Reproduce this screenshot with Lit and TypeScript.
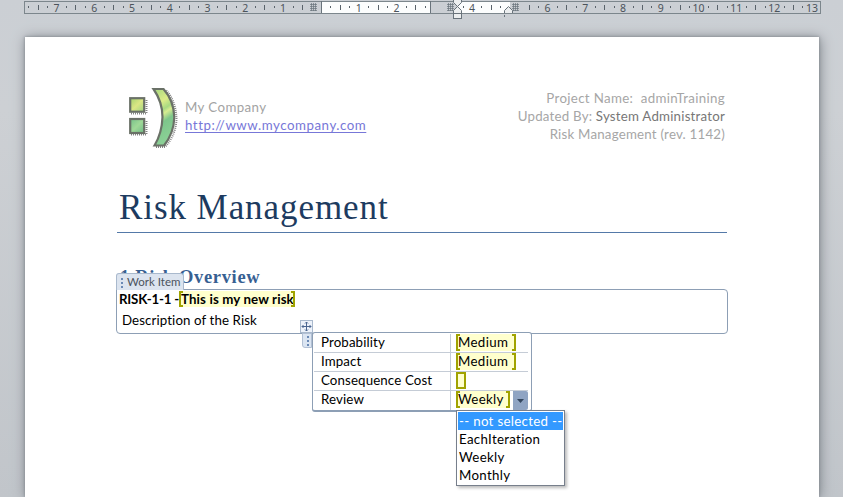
import { LitElement, html, css, svg } from "lit";
import { customElement, state } from "lit/decorators.js";

const ORIGIN = 320.9;
const UNIT = 37.77;

@customElement("page-ruler")
class PageRuler extends LitElement {
  static styles = css`
    :host { display: block; height: 37px; }
    svg { display: block; }
    text { font: 10.5px "Noto Sans", sans-serif; fill: #4b535b; text-anchor: middle; }
    .frame { fill: none; stroke: #7c868c; }
    .lit { fill: #fcfdfd; }
    .edge, .hatch { stroke: #69737b; fill: none; }
    .tick { fill: #59626a; }
    .marker { fill: #eceeef; stroke: #69737b; }
  `;

  private hatch(x: number) {
    return svg`<path class="hatch" d="M${x} 4.5h7M${x} 6.5h7M${x} 8.5h7M${x} 10.5h7M${x + 1.5} 3v8M${x + 3.5} 3v8M${x + 5.5} 3v8" stroke-width=".7"/>`;
  }

  render() {
    const marks = [];
    for (let q = -31; q <= 52; q++) {
      const x = ORIGIN + (q * UNIT) / 4;
      const n = q / 4;
      if ((x > 308 && x < 325) || (x > 426 && x < 459) || (x > 503 && x < 520)) continue;
      if (q % 4 === 0) marks.push(svg`<text x=${x} y="11.5">${Math.abs(n)}</text>`);
      else if (q % 2 === 0) marks.push(svg`<rect class="tick" x=${Math.round(x)} y="5" width="1" height="5"/>`);
      else marks.push(svg`<rect class="tick" x=${Math.round(x)} y="6" width="1" height="2"/>`);
    }
    return html`<svg width="843" height="24" viewBox="0 0 843 24">
      <rect class="lit" x="321" y="1" width="110" height="12" />
      <rect class="lit" x="457" y="1" width="53" height="12" />
      <rect class="frame" x="24.5" y="1.5" width="796" height="12" />
      <path class="edge" d="M321.5 1v12M430.5 1v12" />
      ${marks}${this.hatch(310)}${this.hatch(447)}${this.hatch(512)}
      <path class="marker" d="M453.500 0V2.500L457.500 6.500L461.500 2.500V0M453.500 13.500V10.500L457.500 6.500L461.500 10.500V13.500z" />
      <rect class="marker" x="453.500" y="13.500" width="8" height="5" />
      <path class="marker" d="M504.500 13V10.500L508.500 6.500L512.500 10.500V13" />
      <path class="edge" d="M504.500 15v2" />
    </svg>`;
  }
}

@customElement("company-logo")
class CompanyLogo extends LitElement {
  static styles = css`
    :host { display: block; width: 50px; height: 62px; }
    svg { display: block; }
    .shade { fill: none; stroke: #858585; stroke-width: 2; stroke-dasharray: 1 1; }
    .outline { stroke: #6a7167; stroke-width: 2.2; }
  `;
  render() {
    return html`<svg width="50" height="62" viewBox="0 0 50 62">
      <defs>
        <linearGradient id="arc" x1="0" y1="0" x2=".25" y2="1">
          <stop offset="0" stop-color="#a5d77f" /><stop offset=".3" stop-color="#dcec88" />
          <stop offset=".45" stop-color="#a8d982" /><stop offset=".52" stop-color="#d8ed91" />
          <stop offset=".66" stop-color="#7dc68b" /><stop offset="1" stop-color="#8bd096" />
        </linearGradient>
        <linearGradient id="eye" x1="0" y1="0" x2="1" y2="1">
          <stop offset="0" stop-color="#a4d36f" /><stop offset=".5" stop-color="#dbe784" /><stop offset="1" stop-color="#9ed580" />
        </linearGradient>
        <linearGradient id="eye2" x1="0" y1="0" x2="1" y2="1">
          <stop offset="0" stop-color="#76c18a" /><stop offset=".5" stop-color="#a0d998" /><stop offset="1" stop-color="#6fbb87" />
        </linearGradient>
      </defs>
      <path class="shade" d="M3 26.500H18.500V12M3 47.500H18.500V33M28 60H37Q48 48 48.500 32Q48 14 38 3" />
      <rect class="outline" fill="url(#eye)" x="2.200" y="11.200" width="14" height="13.500" />
      <rect class="outline" fill="url(#eye2)" x="2.200" y="32" width="14" height="14" />
      <path class="outline" fill="url(#arc)" d="M25.500 2H35.500Q46 14 46.300 30Q46 46 36 58.500H26.500Q34 46 34.500 30Q34.500 15 25.500 2Z" />
    </svg>`;
  }
}

@customElement("app-root")
class AppRoot extends LitElement {
  @state() private selected = 0;
  private options = ["-- not selected --", "EachIteration", "Weekly", "Monthly"];

  static styles = css`
    :host {
      display: block; width: 843px; height: 497px; overflow: hidden; box-sizing: border-box;
      font: 13.3px/18px Lato, "Liberation Sans", sans-serif; color: #000;
      font-variant-ligatures: none;
      background: linear-gradient(#cbcfd4 0, #cdd0d4 110px, #c1c5ca 497px);
    }
    .paper {
      width: 610px; height: 460px; margin-left: 25px; padding: 0 92px; background: #fff;
      box-shadow: 0 0 3px #80868c, 1px 1px 12px #7d838a;
    }
    .head { display: flex; box-sizing: border-box; padding: 50px 0 0 11px; height: 111px; }
    .company { padding-top: 11px; margin-left: 7px; color: #a3a3a3; letter-spacing: .4px; }
    .link { color: #7777d8; text-decoration: underline; text-underline-offset: 2px; letter-spacing: .53px; }
    .meta { margin: 2px 2px 0 auto; text-align: right; color: #a6a6a6; white-space: pre; letter-spacing: .21px; }
    .wide { letter-spacing: .34px; }
    .dark { color: #777; }
    h1 {
      margin: 34px 0 0; height: 50px; padding-left: 2px; border-bottom: 1px solid #5479a8;
      font: 35px/52px "Liberation Serif", serif; letter-spacing: .93px; color: #1d3b60;
    }
    h2 { margin: 34px 0 0; padding-left: 3px; height: 22px; font: bold 18.5px/21px "Liberation Serif", serif; letter-spacing: .65px; color: #376092; }
    .item { position: relative; box-sizing: border-box; width: 612px; height: 45px; border: 1px solid #8d9fb5; border-radius: 0 4px 4px 4px; margin: 0 0 0 -1px; }
    .tab {
      position: absolute; left: -1px; top: -17px; box-sizing: border-box; width: 68px; height: 17px; padding-left: 10px;
      border: 1px solid #a9b9cd; border-bottom: 0; border-radius: 3px 3px 0 0; background: #dce4ef; color: #4c535d;
      font-size: 11.5px; line-height: 16px; white-space: nowrap;
    }
    .grip { position: absolute; left: 4px; top: 4px; width: 2px; height: 10px; background: repeating-linear-gradient(#6a89b5 0 2px, transparent 2px 4px); }
    .title { display: flex; height: 20px; padding-left: 2px; font-weight: bold; line-height: 18px; white-space: pre; }
    .key { width: 60px; letter-spacing: -.2px; }
    .desc { padding: 0 0 0 5px; line-height: 20px; letter-spacing: .1px; }
    .field { position: relative; box-sizing: border-box; background: #ffffcd; height: 17px; padding-left: 2px; line-height: 17px; }
    .field::before, .field::after { content: ""; position: absolute; top: 0; bottom: 0; width: 2px; border: 2px solid #a1a300; }
    .field::before { left: 0; border-right: 0; }
    .field::after { right: 0; border-left: 0; }
    .name { width: 116px; height: 16px; margin-top: 1px; line-height: 16px; letter-spacing: .12px; }
    .fields {
      position: absolute; left: 195px; top: 42px; box-sizing: border-box; width: 220px; height: 80px; padding: 1px 3px 1px 1px;
      border: 1px solid #8d9fb5; border-bottom-width: 2px; border-radius: 3px; background: #fff;
    }
    .row { display: grid; grid-template-columns: 137px 78px; height: 19px; box-sizing: border-box; border-bottom: 1px solid #c5ccd6; line-height: 17px; letter-spacing: .12px; }
    .row:last-of-type { border-bottom: 0; }
    .label { padding-left: 7px; border-right: 1px solid #c5ccd6; }
    .value { display: flex; padding-left: 5px; }
    .medium { width: 60px; letter-spacing: .35px; } .weekly { width: 54px; letter-spacing: .3px; }
    .blank { width: 10px; border: 2px solid #a1a300; }
    .blank::before, .blank::after { display: none; }
    .drop { width: 15px; height: 19px; margin-left: 3px; background: #8fa4c3; border-radius: 0 2px 2px 0; display: grid; place-items: center; }
    .move { position: absolute; left: 183px; top: 30px; width: 11px; height: 11px; border: 1px solid #a9b9cd; background: #edf2fa; }
    .move svg { display: block; }
    .handle { position: absolute; left: 185px; top: 43px; width: 10px; height: 15px; background: #dbe5f2; border: 1px solid #b2c0d4; border-radius: 0 0 0 3px; box-sizing: border-box; }
    .handle .grip { top: 2px; }
    .menu {
      position: absolute; left: 339px; top: 120px; box-sizing: border-box; width: 109px; height: 76px; border: 1px solid #777f8c;
      padding: 1px; background: #fff; box-shadow: 2px 2px 3px #bbb; white-space: nowrap; letter-spacing: .3px;
    }
    .option { height: 18px; padding-left: 1px; line-height: 19px; }
    .on { background: #3399ff; color: #fff; }
  `;

  private row(label: string, text: string, kind: string) {
    return html`<div class="row"><span class="label">${label}</span><span class="value"><span class="field ${kind}">${text}</span>${kind === "weekly"
      ? html`<span class="drop"><svg width="7" height="4"><path d="M0 0h7L3.500 4z" fill="#34475f" /></svg></span>` : ""}</span></div>`;
  }

  render() {
    return html`<page-ruler></page-ruler>
      <main class="paper">
        <header class="head">
          <company-logo></company-logo>
          <div class="company"><div>My Company</div><span class="link">http://www.mycompany.com</span></div>
          <div class="meta"><div class="wide">Project Name:  adminTraining</div><div>Updated By: <span class="dark">System Administrator</span></div><div>Risk Management (rev. 1142)</div></div>
        </header>
        <h1>Risk Management</h1>
        <h2>1 Risk Overview</h2>
        <section class="item">
          <div class="tab"><i class="grip"></i>Work Item</div>
          <div class="title"><span class="key">RISK-1-1 - </span><span class="field name">This is my new risk</span></div>
          <div class="desc">Description of the Risk</div>
          <div class="move"><svg width="11" height="11"><path d="M5.500 1v9M1 5.500h9M4 2.500L5.500 1L7 2.500M4 8.500L5.500 10L7 8.500M2.500 4L1 5.500L2.500 7M8.500 4L10 5.500L8.500 7" fill="none" stroke="#4a6590" /></svg></div>
          <div class="handle"><i class="grip"></i></div>
          <div class="fields">
            ${this.row("Probability", "Medium", "medium")}${this.row("Impact", "Medium", "medium")}${this.row("Consequence Cost", "", "blank")}${this.row("Review", "Weekly", "weekly")}
          </div>
          <div class="menu">${this.options.map((o, i) => html`<div class="option ${i === this.selected ? "on" : ""}" @click=${() => (this.selected = i)}>${o}</div>`)}</div>
        </section>
      </main>`;
  }
}
